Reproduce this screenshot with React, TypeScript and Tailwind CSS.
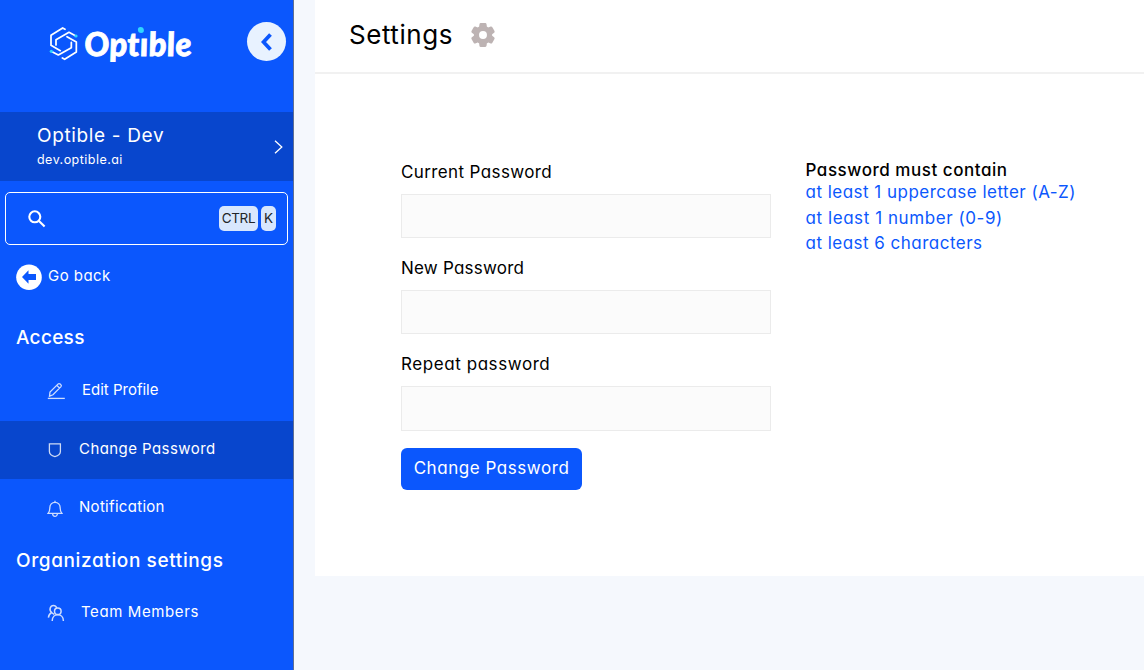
import React from "react";

function Logo() {
  return (
    <div className="flex items-center">
      <svg width="30" height="36" viewBox="144 75 90 108" fill="none" stroke="#fff" strokeWidth="5.2" strokeLinejoin="round" strokeLinecap="round">
        <path d="M195 88 L188 84 L153 106 V136 L181 152" />
        <path d="M187 174 L194 178 L229 156 V126 L201 110" />
        <path d="M226 107 L207 97 L168 119 V135" />
        <path d="M156 155 L175 165 L214 143 V127" />
        <circle cx="228" cy="108" r="4.8" fill="#2fd6ff" stroke="none" />
        <circle cx="154" cy="154" r="4.8" fill="#2fd6ff" stroke="none" />
      </svg>
      <span className="relative ml-[6px] inline-block skew-x-[5deg] font-['Lato'] text-[33px] leading-9 font-black tracking-[0.35px] italic whitespace-nowrap [-webkit-text-stroke:0.8px_white]">
        Optıble
        <span className="absolute top-[2px] left-[55px] size-[6px] rounded-full bg-[#2fd6ff]" />
      </span>
    </div>
  );
}

function Item({ icon, label, active = false, text }: { icon: React.ReactNode; label: string; active?: boolean; text: string }) {
  return (
    <div className={active ? "flex h-[58px] items-center bg-[#0846cd] pl-[47px]" : "flex h-[58px] items-center pl-[47px]"}>
      <span className="flex w-[18px] shrink-0 opacity-80">{icon}</span>
      <span className={text}>{label}</span>
    </div>
  );
}

const stroke = { fill: "none", stroke: "#fff", strokeWidth: 1.3 };

function Field({ label, text, input = "h-[44px]" }: { label: string; text: string; input?: string }) {
  return (
    <label className="block h-24">
      <span className={text}>{label}</span>
      <input type="password" className={`mt-[10px] block w-[370px] border border-[#ebebeb] bg-[#fbfbfb] px-3 outline-none ${input}`} />
    </label>
  );
}

export default function App() {
  return (
    <div className="flex h-[670px] w-[1144px] overflow-hidden bg-[#f5f8fd] font-['Inter',sans-serif] whitespace-nowrap text-black [font-feature-settings:'cv11']">
      <aside className="flex w-[294px] shrink-0 flex-col border-r border-[#5f6f92] bg-[#0b57fd] text-white">
        <div className="flex h-[112px] items-start justify-between pt-[22px] pr-[7px] pl-[48px]">
          <div className="pt-[3px]"><Logo /></div>
          <button className="flex h-[39px] w-[39px] items-center justify-center rounded-full bg-[#e8f2ff]">
            <svg width="12" height="18" viewBox="0 0 12 18" fill="none" stroke="#0b57fd" strokeWidth="3.8"><path d="M9.5 1.5 L2.5 9 L9.5 16.5" /></svg>
          </button>
        </div>
        <div className="flex h-[69px] items-center justify-between bg-[#0846cd] pr-[10px] pl-[37px]">
          <div className="pt-[2px]">
            <div className="text-[19px] leading-6 tracking-[0.65px]">Optible - Dev</div>
            <div className="text-[12.5px] leading-6 tracking-[0.47px]">dev.optible.ai</div>
          </div>
          <svg width="10" height="14" viewBox="0 0 10 14" {...stroke}><path d="M2 .8 L8.8 7 L2 13.2" /></svg>
        </div>
        <div className="mx-[5px] mt-[11px] flex h-[53px] shrink-0 items-center rounded-[5px] border border-white pr-[11px] pl-[22px]">
          <svg width="18" height="18" viewBox="0 0 18 18" fill="none" stroke="#fff" strokeWidth="2.1"><circle cx="6.8" cy="6.8" r="5.5" /><path d="M10.7 10.7 L16.6 16.6" /></svg>
          <kbd className="ml-auto flex h-[25px] w-[39px] items-center justify-center rounded-[5px] bg-[#d8e7fd] font-['Inter'] text-[13.5px] tracking-[-0.3px] text-[#212529]">CTRL</kbd>
          <kbd className="ml-[3px] flex h-[25px] w-[15px] items-center justify-center rounded-[5px] bg-[#d8e7fd] font-['Inter'] text-[13.5px] text-[#212529]">K</kbd>
        </div>
        <div className="mt-[19px] flex h-[26px] items-start pl-4">
          <svg width="26" height="26" viewBox="0 0 26 26"><circle cx="13" cy="13.2" r="12.8" fill="#fff" /><path d="M6 13 L12.5 6.2 V10 H20 V16 H12.5 V19.8 Z" fill="#0b57fd" /></svg>
          <span className="ml-[6px] text-[15px] leading-6 tracking-[0.45px]">Go back</span>
        </div>
        <h2 className="mt-[36px] pl-4 text-[19px] leading-6 font-medium tracking-[0.3px]">Access</h2>
        <div className="mt-[13px] flex flex-col">
          <Item label="Edit Profile" text="ml-[17px] pb-[4px] text-[15px] leading-6" icon={
            <svg className="mb-[2px]" width="18" height="18" viewBox="0 0 18 18" {...stroke}><path d="M2.5 14.2 L3 10 L11.2 1.9 C12.4 .8 15.2 3.3 14 4.6 L6 12.8 Z M9.8 3.3 L12.6 6.1" /><path d="M.8 16.4 H17.8" /></svg>} />
          <Item active label="Change Password" text="ml-[14px] pb-[3px] text-[15px] leading-6 tracking-[0.43px]" icon={
            <svg width="16" height="16" viewBox="0 0 16 16" {...stroke}><path d="M2.4 1.9 H13.4 V9.5 C13.4 12 10.5 14 7.9 14.6 C5.3 14 2.4 12 2.4 9.5 Z" /></svg>} />
          <Item label="Notification" text="ml-[14px] pb-[3px] text-[15px] leading-6 tracking-[0.3px]" icon={
            <svg className="mt-[2px]" width="16" height="18" viewBox="0 0 16 18" {...stroke}><path d="M1.2 13.3 H14.8 C13.4 11.8 13.2 10.8 13.2 8 C13.2 4.6 11.1 2.4 8 2.4 C4.9 2.4 2.8 4.6 2.8 8 C2.8 10.8 2.6 11.8 1.2 13.3 Z M8 .7 V2.4 M5.6 13.5 C5.6 17.3 10.4 17.3 10.4 13.5" /></svg>} />
        </div>
        <h2 className="mt-[12px] pl-4 text-[19px] leading-6 font-medium tracking-[0.62px]">Organization settings</h2>
        <div className="mt-[11px]">
          <Item label="Team Members" text="ml-[16px] pb-[3px] text-[15px] leading-6 tracking-[0.6px]" icon={
            <svg width="18" height="18" viewBox="0 0 18 18" {...stroke} strokeWidth={1.5}><circle cx="10.8" cy="7.3" r="3.3" /><path d="M5.2 17 C5.2 8.8 16.4 8.8 16.4 17 M1.4 13.6 C1.7 11 2.5 9.5 4.7 8.5 L7.2 10.5 M4.7 8.5 C1.4 5.6 3.5 1.5 6.4 1.5 C8.2 1.5 9.2 2.4 9.8 4" /></svg>} />
        </div>
      </aside>
      <main className="ml-[21px] h-[576px] flex-1 bg-white">
        <header className="flex h-[74px] items-center border-b-2 border-[#f1f1f1] pb-[2px] pl-[34px]">
          <h1 className="w-[120px] text-[26px] leading-8 tracking-[0.55px]">Settings</h1>
          <svg width="28" height="28" viewBox="0 0 24 24" fill="#bdb3b3" stroke="#bdb3b3" strokeWidth="1.3" strokeLinejoin="round"><path d="M19.14 12.94c.04-.3.06-.61.06-.94 0-.32-.02-.64-.07-.94l2.03-1.58c.18-.14.23-.41.12-.61l-1.92-3.32c-.12-.22-.37-.29-.59-.22l-2.39.96c-.5-.38-1.03-.7-1.62-.94l-.36-2.54c-.04-.24-.24-.41-.48-.41h-3.84c-.24 0-.43.17-.47.41l-.36 2.54c-.59.24-1.13.57-1.62.94l-2.39-.96c-.22-.08-.47 0-.59.22L2.74 8.87c-.12.21-.08.47.12.61l2.03 1.58c-.05.3-.09.63-.09.94s.02.64.07.94l-2.03 1.58c-.18.14-.23.41-.12.61l1.92 3.32c.12.22.37.29.59.22l2.39-.96c.5.38 1.03.7 1.62.94l.36 2.54c.05.24.24.41.48.41h3.84c.24 0 .44-.17.47-.41l.36-2.54c.59-.24 1.13-.56 1.62-.94l2.39.96c.22.08.47 0 .59-.22l1.92-3.32c.12-.22.07-.47-.12-.61z" /><circle cx="12" cy="12" r="3.4" fill="#fff" stroke="none" /></svg>
        </header>
        <div className="flex pt-[86px] pl-[86px]">
          <form className="w-[404px]">
            <Field label="Current Password" text="block text-[17px] leading-6 tracking-[0.38px]" />
            <Field label="New Password" text="block text-[17px] leading-6 tracking-[0.22px]" />
            <Field label="Repeat password" text="block text-[17px] leading-6 tracking-[0.57px]" input="h-[45px]" />
            <button type="button" className="flex h-[42px] w-[181px] items-center justify-center rounded-[6px] bg-[#0b57fd] text-[17px] tracking-[0.55px] text-white">Change Password</button>
          </form>
          <div className="-mt-[2px] ml-[0.5px] text-[17px] text-[#0b57fd]">
            <div className="leading-6 font-medium tracking-[0.54px] text-black">Password must contain</div>
            <div className="-mt-[2px] leading-[25.5px] tracking-[0.48px]">at least 1 uppercase letter (A-Z)</div>
            <div className="leading-[25.5px] tracking-[0.57px]">at least 1 number (0-9)</div>
            <div className="leading-[25.5px] tracking-[0.48px]">at least 6 characters</div>
          </div>
        </div>
      </main>
    </div>
  );
}
